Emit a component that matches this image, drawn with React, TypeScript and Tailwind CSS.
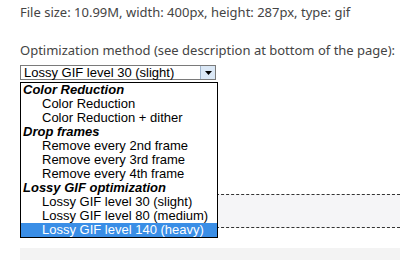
import { useState } from 'react'

type Row = { label: string; group?: boolean }

const rows: Row[] = [
  { label: 'Color Reduction', group: true },
  { label: 'Color Reduction' },
  { label: 'Color Reduction + dither' },
  { label: 'Drop frames', group: true },
  { label: 'Remove every 2nd frame' },
  { label: 'Remove every 3rd frame' },
  { label: 'Remove every 4th frame' },
  { label: 'Lossy GIF optimization', group: true },
  { label: 'Lossy GIF level 30 (slight)' },
  { label: 'Lossy GIF level 80 (medium)' },
  { label: 'Lossy GIF level 140 (heavy)' },
]

export default function App() {
  const [active] = useState(10)

  return (
    <div className="relative w-[400px] h-[260px] overflow-hidden bg-white font-['Noto_Sans',sans-serif] text-[#444]">
      {/* File info */}
      <p className="pl-5 pt-[2px] text-[13px] leading-[20px] whitespace-nowrap">File size: 10.99M, width: 400px, height: 287px, type: gif</p>

      <p className="pl-5 mt-[18px] text-[13px] leading-[20px] whitespace-nowrap">Optimization method (see description at bottom of the page):</p>

      {/* Select */}
      <div className="ml-[20px] mt-[5px] w-[196px] h-[15px] border border-[#7a7a7a] bg-white flex items-center font-['Liberation_Sans',sans-serif] text-[13px] leading-[13px] text-black">
        <span className="flex-1 pl-[3px] whitespace-nowrap">Lossy GIF level 30 (slight)</span>
        <span className="w-[15px] h-[13px] border-l border-[#9fb4cc] bg-[#dbe8f6] flex items-center justify-center">
          <svg width="7" height="4" viewBox="0 0 7 4">
            <path d="M0 0h7L3.5 4z" fill="#000" />
          </svg>
        </span>
      </div>

      {/* Content behind the open list */}
      <div className="ml-[20px] mt-[114px] h-[34px] border-y border-dashed border-[#333] bg-[#f5f5f7]" />
      <div className="ml-[20px] mt-[20px] h-[12px] bg-[#f3f3f3]" />

      {/* Open dropdown list */}
      <ul className="absolute left-[20px] top-[82px] w-[198px] border border-black bg-white font-['Liberation_Sans',sans-serif] text-[13px] leading-[14px] text-black">
        {rows.map((r, i) => (
          <li
            key={i}
            className={
              r.group
                ? 'h-[14px] pl-[2px] font-bold italic whitespace-nowrap'
                : i === active
                  ? 'h-[14px] pl-[21px] bg-[#3a8ee6] text-white whitespace-nowrap'
                  : 'h-[14px] pl-[21px] whitespace-nowrap'
            }
          >
            {r.label}
          </li>
        ))}
      </ul>
    </div>
  )
}
